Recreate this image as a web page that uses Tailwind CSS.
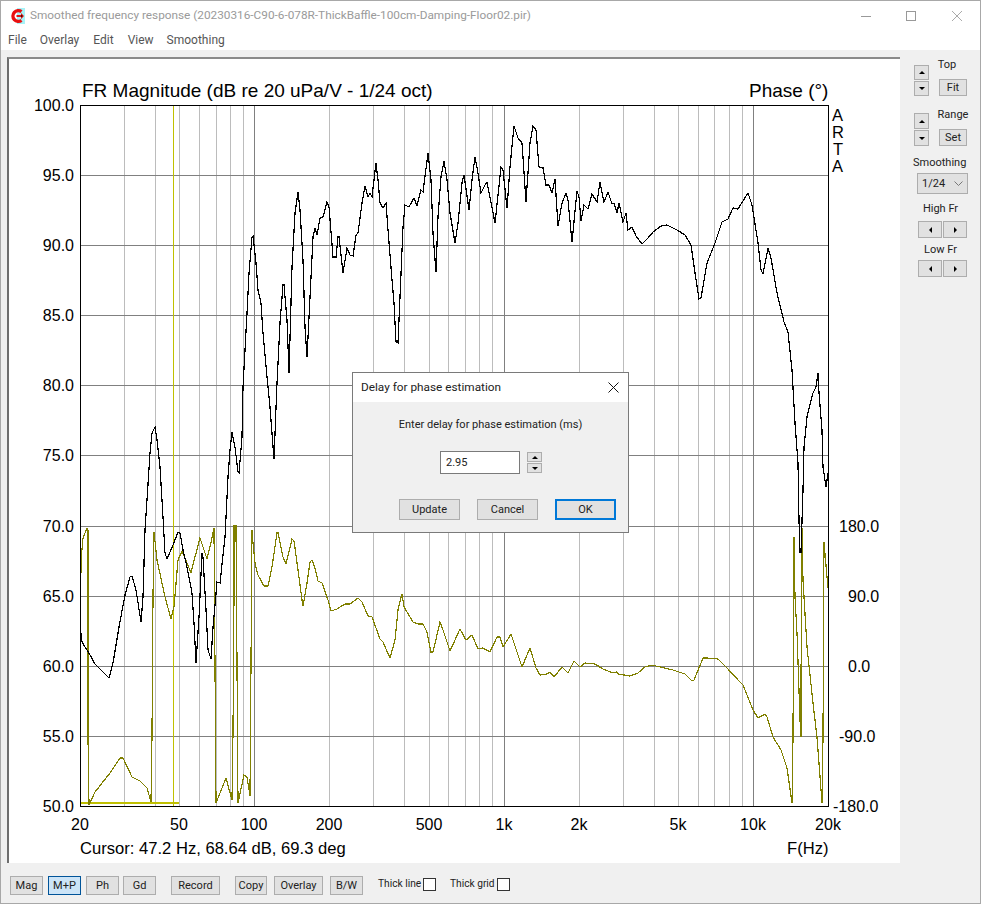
<!DOCTYPE html>
<html lang="en">
<head>
    <meta charset="UTF-8">
    <title>Smoothed frequency response</title>
    <script src="https://cdn.jsdelivr.net/npm/@tailwindcss/browser@4"></script>
</head>
<body class="bg-[#f0f0f0]">
<div class="relative w-[981px] h-[904px] flex flex-col overflow-hidden border border-[#a8a8a8] bg-[#f0f0f0] font-['Roboto',sans-serif] text-[11px] leading-none text-[#222]">

    <!-- title bar -->
    <div class="h-[29px] shrink-0 bg-white flex items-center">
        <svg class="ml-[9px] w-[16px] h-[16px]" viewBox="0 0 16 16">
            <rect x="7" width="8" height="16" fill="#a6f2f7"/>
            <path d="M11.5 3.6A5.4 5.4 0 1 0 11.5 12.4" fill="none" stroke="#e81010" stroke-width="3.4"/>
            <path d="M6.5 7H11V5L14 8L11 11V9H6.5Z" fill="#e81010"/>
            <path d="M11 7L13 8L11 9Z" fill="#111"/>
        </svg>
        <span class="ml-[4px] text-[11.8px] text-[#9a9a9a] whitespace-nowrap">Smoothed frequency response (20230316-C90-6-078R-ThickBaffle-100cm-Damping-Floor02.pir)</span>
        <div class="ml-auto flex items-center">
            <svg class="w-[10px] h-[10px]" viewBox="0 0 10 10"><path d="M0 5.5H10" stroke="#999"/></svg>
            <svg class="ml-[35px] w-[10px] h-[10px]" viewBox="0 0 10 10"><rect x=".5" y=".5" width="9" height="9" fill="none" stroke="#999"/></svg>
            <svg class="ml-[36px] mr-[18px] w-[10px] h-[10px]" viewBox="0 0 10 10"><path d="M0 0L10 10M10 0L0 10" stroke="#aaa"/></svg>
        </div>
    </div>

    <!-- menu -->
    <div class="h-[20px] shrink-0 bg-white flex items-center pl-[7px] gap-[14px] text-[12px] text-[#555]">
        <span>File</span><span class="ml-[-1px]">Overlay</span><span>Edit</span><span>View</span><span class="ml-[-1px]">Smoothing</span>
    </div>

    <div class="flex flex-1 min-h-0 pt-[7px]">
        <!-- plot -->
        <div class="ml-[6px] w-[893px] h-[806px] shrink-0 bg-white border-t-2 border-l-2 border-t-[#8a8a8a] border-l-[#6e6e6e]">
            <svg class="w-[891px] h-[804px] block font-['Liberation_Sans',sans-serif]" viewBox="9 59 891 804">
                <!-- minor frequency lines -->
                <path shape-rendering="crispEdges" stroke="#bcbcbc" fill="none" d="M124.5 105V806M155.5 105V806M179.5 105V806M199.5 105V806M216.5 105V806M230.5 105V806M243.5 105V806M329.5 105V806M373.5 105V806M404.5 105V806M429.5 105V806M448.5 105V806M465.5 105V806M479.5 105V806M492.5 105V806M579.5 105V806M623.5 105V806M654.5 105V806M678.5 105V806M698.5 105V806M714.5 105V806M729.5 105V806M742.5 105V806"/>
                <!-- decades and dB lines -->
                <path shape-rendering="crispEdges" stroke="#808080" fill="none" d="M254.5 105V806M504.5 105V806M753.5 105V806M80 175.5H828M80 245.5H828M80 315.5H828M80 385.5H828M80 455.5H828M80 526.5H828M80 596.5H828M80 666.5H828M80 736.5H828"/>
                <!-- cursor -->
                <path shape-rendering="crispEdges" stroke="#c0c000" fill="none" d="M173.5 105V806"/>
                <rect shape-rendering="crispEdges" x="80" y="802" width="99" height="2" fill="#c0c000"/>
                <!-- phase -->
                <polyline shape-rendering="crispEdges" fill="none" stroke="#808000" stroke-width="1.2" points="81,573 81,560 83,538 87,528 88,530 88,737 89,805 95,792 110,773 120,758 123,758 132,777 140,781 147,788 151,802 152,735 153,597 154,532 157,560 165,597 171,619 174,607 178,560 182,551 187,563 191,573 195,557 200,538 207,559 212,538 214,528 215,667 216,803 226,778 232,800 233,732 234,595 234,526 236,526 237,665 238,803 244,775 247,777 250,796 251,663 252,530 253,543 255,563 258,575 264,586 268,586 272,567 277,533 278,533 283,557 286,564 290,548 292,539 294,541 298,570 302,600 303,606 307,583 310,562 312,560 315,568 318,581 322,583 328,600 331,611 337,609 345,604 350,604 358,598 362,602 368,616 372,617 380,639 383,642 390,658 395,640 398,610 402,594 404,607 413,622 418,624 423,624 427,632 431,652 433,652 440,622 443,630 450,651 460,629 466,640 472,635 478,649 483,648 490,652 497,637 500,637 503,647 511,634 517,652 522,667 530,648 536,668 540,675 547,674 550,672 554,677 562,667 568,673 574,661 580,667 585,663 595,664 603,669 613,673 617,672 618,674 630,676 638,673 645,667 652,665 660,667 673,670 685,674 692,681 694,680 703,658 707,658 718,659 727,668 740,682 743,685 753,710 758,718 765,714 767,717 773,737 781,750 787,768 792,803 793,737 794,537 795,597 797,633 800,720 801,737 801,683 802,528 803,580 807,647 813,703 817,737 822,803 823,737 824,542 827,577 828,588"/>
                <!-- magnitude -->
                <polyline shape-rendering="crispEdges" fill="none" stroke="#000" stroke-width="1.2" points="81,633 82,642 90,655 95,664 109,678 113,663 119,627 125,595 130,577 132,576 136,590 141,622 143,597 145,530 147,500 150,453 152,433 155,427 157,440 160,467 163,517 165,553 167,559 173,545 178,532 180,533 183,550 187,567 192,593 194,623 196,663 199,617 202,553 203,557 206,610 208,650 211,659 213,627 215,605 217,582 220,583 225,537 228,477 230,450 232,432 235,447 238,472 239,473 242,437 243,387 247,313 249,273 252,237 253,236 256,263 258,290 261,303 263,333 267,377 270,407 274,459 277,383 280,323 283,285 284,285 287,320 289,373 292,267 295,213 298,192 300,210 303,260 305,327 307,357 310,297 313,237 315,228 317,235 320,218 323,217 327,202 329,207 333,257 336,257 338,237 339,237 343,273 347,248 350,255 353,256 356,235 358,233 362,203 365,186 368,197 370,193 372,197 376,163 378,180 380,203 383,208 386,203 388,230 392,280 394,303 396,342 398,343 400,297 403,227 405,205 409,207 414,198 417,206 421,190 423,192 428,153 431,180 433,233 436,272 438,217 441,177 444,161 447,180 450,213 455,243 458,223 462,183 464,175 469,210 472,180 475,157 477,167 481,193 485,185 487,182 495,223 501,167 503,170 507,208 510,167 514,126 518,138 522,143 526,202 530,143 533,126 536,130 539,167 543,168 546,185 549,185 552,193 555,179 558,226 562,203 566,193 568,200 572,242 577,191 579,197 581,221 584,205 588,209 592,194 597,202 600,182 604,202 608,192 612,204 614,203 617,213 619,203 623,222 626,213 628,230 632,227 636,236 642,244 648,238 653,232 661,226 667,225 677,230 685,235 691,245 695,273 699,299 701,298 707,263 715,243 722,222 728,219 733,208 738,209 748,193 752,205 758,243 761,270 763,274 768,248 771,258 777,293 784,322 788,332 792,370 795,423 798,463 799,520 800,552 801,552 803,490 804,447 807,417 813,393 816,387 818,373 819,393 822,430 823,467 826,487 828,473"/>
                <!-- frame -->
                <rect shape-rendering="crispEdges" x="80.5" y="105.5" width="748" height="701" fill="none" stroke="#000"/>

                <g class="text-[19px]" fill="#000">
                    <text x="82" y="97">FR Magnitude (dB re 20 uPa/V - 1/24 oct)</text>
                    <text x="749" y="97">Phase (°)</text>
                </g>
                <g class="text-[16.5px]" fill="#000">
                    <text x="832" y="121">A</text>
                    <text x="832" y="138">R</text>
                    <text x="833" y="155">T</text>
                    <text x="832" y="172">A</text>
                </g>
                <g class="text-[16px]" fill="#000" text-anchor="end">
                    <text x="74" y="111">100.0</text>
                    <text x="74" y="181">95.0</text>
                    <text x="74" y="251">90.0</text>
                    <text x="74" y="321">85.0</text>
                    <text x="74" y="391">80.0</text>
                    <text x="74" y="461">75.0</text>
                    <text x="74" y="532">70.0</text>
                    <text x="74" y="602">65.0</text>
                    <text x="74" y="672">60.0</text>
                    <text x="74" y="742">55.0</text>
                    <text x="74" y="812">50.0</text>
                </g>
                <g class="text-[16px]" fill="#000">
                    <text x="839" y="532">180.0</text>
                    <text x="848" y="602">90.0</text>
                    <text x="848" y="672">0.0</text>
                    <text x="839" y="742">-90.0</text>
                    <text x="833" y="812">-180.0</text>
                </g>
                <g class="text-[16px]" fill="#000" text-anchor="middle">
                    <text x="80" y="830">20</text>
                    <text x="179" y="830">50</text>
                    <text x="254" y="830">100</text>
                    <text x="329" y="830">200</text>
                    <text x="429" y="830">500</text>
                    <text x="504" y="830">1k</text>
                    <text x="579" y="830">2k</text>
                    <text x="678" y="830">5k</text>
                    <text x="753" y="830">10k</text>
                    <text x="828" y="830">20k</text>
                </g>
                <g class="text-[16.6px]" fill="#000">
                    <text x="80" y="854">Cursor: 47.2 Hz, 68.64 dB, 69.3 deg</text>
                    <text x="787" y="854">F(Hz)</text>
                </g>
            </svg>
        </div>

        <!-- side controls -->
        <div class="flex-1 pt-[8px] pl-[14px]">
            <div class="flex h-[32px]">
                <div class="flex flex-col gap-[1px]">
                    <button class="w-[15px] h-[15px] bg-[#e1e1e1] border border-[#adadad] flex items-center justify-center"><span class="border-x-[3px] border-x-transparent border-b-[3px] border-b-black"></span></button>
                    <button class="w-[15px] h-[15px] bg-[#e1e1e1] border border-[#adadad] flex items-center justify-center"><span class="border-x-[3px] border-x-transparent border-t-[3px] border-t-black"></span></button>
                </div>
                <div class="ml-[10px] mt-[-6px] w-[28px] flex flex-col items-center">
                    <span class="h-[20px] mr-[12px]">Top</span>
                    <button class="w-[28px] h-[17px] bg-[#e1e1e1] border border-[#adadad]">Fit</button>
                </div>
            </div>
            <div class="flex h-[33px] mt-[16px]">
                <div class="flex flex-col gap-[1px]">
                    <button class="w-[15px] h-[16px] bg-[#e1e1e1] border border-[#adadad] flex items-center justify-center"><span class="border-x-[3px] border-x-transparent border-b-[3px] border-b-black"></span></button>
                    <button class="w-[15px] h-[16px] bg-[#e1e1e1] border border-[#adadad] flex items-center justify-center"><span class="border-x-[3px] border-x-transparent border-t-[3px] border-t-black"></span></button>
                </div>
                <div class="ml-[10px] w-[28px] flex flex-col items-center">
                    <span class="h-[16px] mt-[-4px] whitespace-nowrap">Range</span>
                    <button class="mt-[4px] w-[28px] h-[18px] bg-[#e1e1e1] border border-[#adadad]">Set</button>
                </div>
            </div>
            <div class="mt-[11px] ml-[-1px] h-[13px]">Smoothing</div>
            <div class="mt-[3px] ml-[3px] w-[51px] h-[21px] bg-[#e1e1e1] border border-[#adadad] flex items-center justify-between pl-[4px] pr-[4px]">
                <span>1/24</span>
                <svg class="w-[9px] h-[6px]" viewBox="0 0 9 6"><path d="M.5 .5L4.5 4.5L8.5 .5" fill="none" stroke="#777"/></svg>
            </div>
            <div class="mt-[9px] ml-[4px] w-[45px] text-center h-[13px] whitespace-nowrap">High Fr</div>
            <div class="mt-[5px] ml-[4px] flex gap-[1px]">
                <button class="w-[24px] h-[17px] bg-[#e1e1e1] border border-[#adadad] flex items-center justify-center"><span class="border-y-[3px] border-y-transparent border-r-[3px] border-r-black"></span></button>
                <button class="w-[24px] h-[17px] bg-[#e1e1e1] border border-[#adadad] flex items-center justify-center"><span class="border-y-[3px] border-y-transparent border-l-[3px] border-l-black"></span></button>
            </div>
            <div class="mt-[6px] ml-[4px] w-[45px] text-center h-[13px] whitespace-nowrap">Low Fr</div>
            <div class="mt-[3px] ml-[4px] flex gap-[1px]">
                <button class="w-[24px] h-[17px] bg-[#e1e1e1] border border-[#adadad] flex items-center justify-center"><span class="border-y-[3px] border-y-transparent border-r-[3px] border-r-black"></span></button>
                <button class="w-[24px] h-[17px] bg-[#e1e1e1] border border-[#adadad] flex items-center justify-center"><span class="border-y-[3px] border-y-transparent border-l-[3px] border-l-black"></span></button>
            </div>
        </div>
    </div>

    <!-- bottom toolbar -->
    <div class="h-[40px] shrink-0 pt-[13px] pl-[9px] flex items-start">
        <button class="w-[33px] h-[19px] bg-[#e1e1e1] border border-[#adadad]">Mag</button>
        <button class="ml-[5px] w-[33px] h-[19px] bg-[#cce4f7] border border-[#005499]">M+P</button>
        <button class="ml-[5px] w-[33px] h-[19px] bg-[#e1e1e1] border border-[#adadad]">Ph</button>
        <button class="ml-[4px] w-[33px] h-[19px] bg-[#e1e1e1] border border-[#adadad]">Gd</button>
        <button class="ml-[15px] w-[49px] h-[19px] bg-[#e1e1e1] border border-[#adadad]">Record</button>
        <button class="ml-[15px] w-[32px] h-[19px] bg-[#e1e1e1] border border-[#adadad]">Copy</button>
        <button class="ml-[7px] w-[49px] h-[19px] bg-[#e1e1e1] border border-[#adadad]">Overlay</button>
        <button class="ml-[7px] w-[33px] h-[19px] bg-[#e1e1e1] border border-[#adadad]">B/W</button>
        <span class="ml-[15px] mt-[3px] w-[45px] text-[10.2px] whitespace-nowrap">Thick line</span>
        <span class="mt-[2px] w-[13px] h-[13px] bg-white border border-[#333]"></span>
        <span class="ml-[14px] mt-[3px] w-[47px] text-[10.2px] whitespace-nowrap">Thick grid</span>
        <span class="mt-[2px] w-[13px] h-[13px] bg-white border border-[#333]"></span>
    </div>

    <!-- delay dialog -->
    <div class="absolute left-[351px] top-[371px] w-[277px] h-[161px] bg-[#f0f0f0] border border-[#7a7a7a] flex flex-col">
        <div class="h-[29px] bg-white flex items-center justify-between pl-[8px] pr-[9px]">
            <span class="text-[11.8px]">Delay for phase estimation</span>
            <svg class="w-[11px] h-[11px]" viewBox="0 0 11 11"><path d="M.5 .5L10.5 10.5M10.5 .5L.5 10.5" stroke="#111"/></svg>
        </div>
        <div class="mt-[17px] text-center">Enter delay for phase estimation (ms)</div>
        <div class="mt-[21px] ml-[87px] flex items-center">
            <div class="w-[80px] h-[23px] bg-white border border-[#7a7a7a] flex items-center pl-[5px]">2.95</div>
            <div class="ml-[7px] flex flex-col gap-[1px]">
                <button class="w-[15px] h-[10px] bg-[#e1e1e1] border border-[#adadad] flex items-center justify-center"><span class="border-x-[3px] border-x-transparent border-b-[3px] border-b-black"></span></button>
                <button class="w-[15px] h-[10px] bg-[#e1e1e1] border border-[#adadad] flex items-center justify-center"><span class="border-x-[3px] border-x-transparent border-t-[3px] border-t-black"></span></button>
            </div>
        </div>
        <div class="mt-[25px] ml-[46px] flex gap-[17px]">
            <button class="w-[61px] h-[21px] bg-[#e1e1e1] border border-[#adadad]">Update</button>
            <button class="w-[61px] h-[21px] bg-[#e1e1e1] border border-[#adadad]">Cancel</button>
            <button class="w-[61px] h-[21px] bg-[#e1e1e1] border-2 border-[#0078d7]">OK</button>
        </div>
    </div>
</div>
</body>
</html>
